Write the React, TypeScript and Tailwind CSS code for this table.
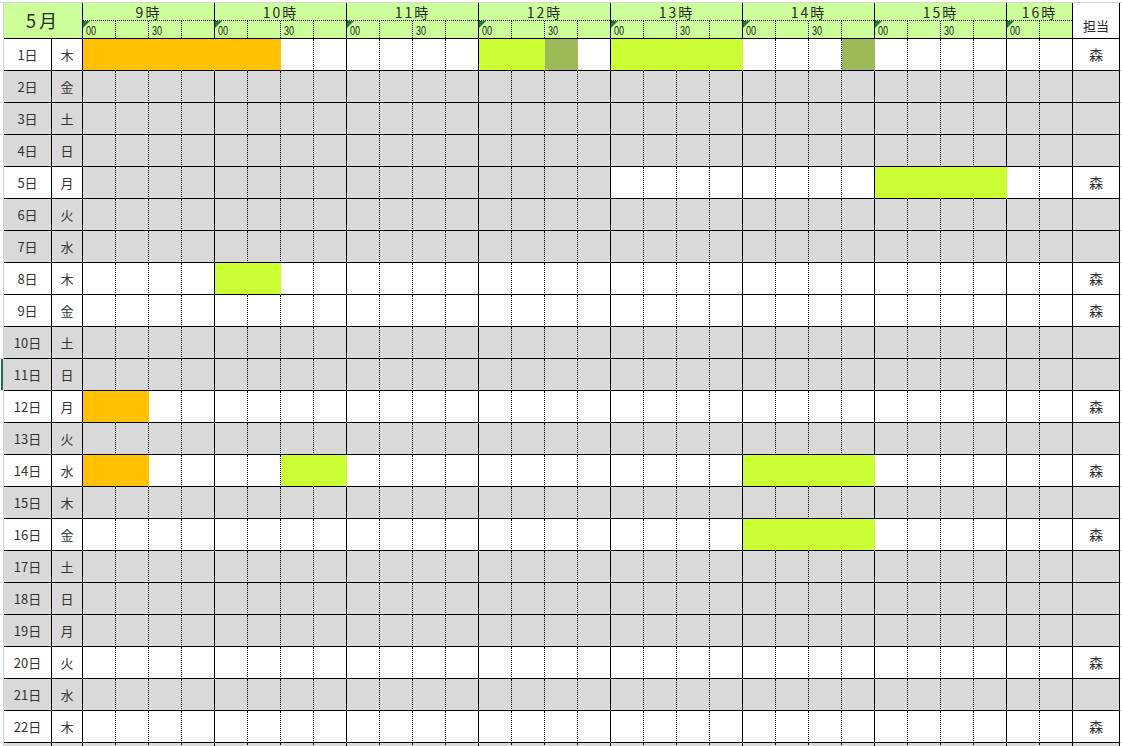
const HOURS = [9, 10, 11, 12, 13, 14, 15, 16];
const WEEK = ["木", "金", "土", "日", "月", "火", "水"];

// one char per 15-minute cell, 9:00 - 16:30
// g = grey (off), w = white, o = orange, l = lime, v = olive
const rows: Record<number, string> = {
  1: "oooooowwwwwwllvwllllwwwvwwwwww",
  5: "ggggggggggggggggwwwwwwwwllllww",
  8: "wwwwllwwwwwwwwwwwwwwwwwwwwwwww",
  9: "wwwwwwwwwwwwwwwwwwwwwwwwwwwwww",
  12: "oowwwwwwwwwwwwwwwwwwwwwwwwwwww",
  14: "oowwwwllwwwwwwwwwwwwllllwwwwww",
  16: "wwwwwwwwwwwwwwwwwwwwllllwwwwww",
  20: "wwwwwwwwwwwwwwwwwwwwwwwwwwwwww",
  22: "wwwwwwwwwwwwwwwwwwwwwwwwwwwwww",
};

const FILL: Record<string, string> = {
  g: "bg-[#d9d9d9]",
  w: "bg-white",
  o: "bg-[#ffc000] border-r-[#ffc000]",
  l: "bg-[#ccff33] border-r-[#ccff33]",
  v: "bg-[#9bbb59] border-r-[#9bbb59]",
};

function Corner() {
  return (
    <svg className="absolute left-0 top-0" width="7" height="7" viewBox="0 0 7 7">
      <polygon points="0,0 7,0 0,7" fill="#1d7a35" />
    </svg>
  );
}

function Header() {
  return (
    <>
      <div className="h-[3px] border-b border-[#d4d4d4] bg-white" />
      <div className="flex h-[36px]">
        <div className="w-[4px] border-r border-[#d4d4d4]" />
        <div className="flex w-[79px] items-center justify-center border-r border-b border-black bg-[#ccff99] text-[18px] tracking-[3px] text-[#2a2a2a]">
          5月
        </div>
        {HOURS.map((h) => {
          const subs = h === 16 ? 2 : 4;
          return (
            <div
              key={h}
              className={`flex flex-col border-r border-b border-black bg-[#ccff99] ${h === 16 ? "w-[66px]" : "w-[132px]"}`}
            >
              <div className="flex h-[18px] items-center justify-center border-b border-dotted border-black text-[14px] leading-none tracking-[2px] text-[#2a2a2a]">
                {h}時
              </div>
              <div className="flex flex-1">
                {Array.from({ length: subs }).map((_, i) => (
                  <div
                    key={i}
                    className={`relative flex items-end pb-[1px] pl-[3px] font-['Liberation_Sans',sans-serif] text-[13px] leading-none text-[#222222] ${i === subs - 1 ? "flex-1" : "w-[33px] border-r border-dotted border-black"}`}
                  >
                    {i === 0 && <Corner />}
                    {i === 0 && <span className="inline-block origin-left scale-x-[0.7]">00</span>}
                    {i === 2 && <span className="inline-block origin-left scale-x-[0.7]">30</span>}
                  </div>
                ))}
              </div>
            </div>
          );
        })}
        <div className="flex w-[47px] items-end justify-center border-r border-b border-black bg-white pb-[3px] text-[13px] text-[#2a2a2a]">
          担当
        </div>
        <div className="flex-1" />
      </div>
    </>
  );
}

function DayRow({ day }: { day: number }) {
  const plan = rows[day];
  const on = !!plan;
  const cells = plan ?? "g".repeat(30);
  const side = on ? "bg-white" : "bg-[#d9d9d9]";
  const label = day <= 22;
  return (
    <div className="flex h-[32px]">
      <div className="relative w-[4px] border-r border-b border-[#d4d4d4]">
        {day === 11 && <div className="absolute left-[1px] top-0 h-full w-[2px] bg-[#217346]" />}
      </div>
      <div className={`flex w-[48px] items-center justify-center border-r border-b border-black text-[13px] ${side}`}>
        {label && `${day}日`}
      </div>
      <div className={`flex w-[31px] items-center justify-center border-r border-b border-black text-[13px] ${side}`}>
        {label && WEEK[(day - 1) % 7]}
      </div>
      {cells.split("").map((c, i) => (
        <div
          key={i}
          className={`w-[33px] border-r border-b border-black ${i % 4 === 3 || i === 29 ? "" : "[border-right-style:dotted]"} ${FILL[c]}`}
        />
      ))}
      <div className={`flex w-[47px] items-center justify-center border-r border-b border-black text-[14px] ${side}`}>
        {on ? "森" : ""}
      </div>
      <div className="flex-1 border-b border-[#d4d4d4]" />
    </div>
  );
}

export default function App() {
  const days = Array.from({ length: 23 }, (_, i) => i + 1);
  return (
    <div className="h-[746px] w-[1122px] overflow-hidden bg-white font-['Noto_Sans_CJK_JP',sans-serif] text-[#333333]">
      <Header />
      {days.map((d) => (
        <DayRow key={d} day={d} />
      ))}
    </div>
  );
}
